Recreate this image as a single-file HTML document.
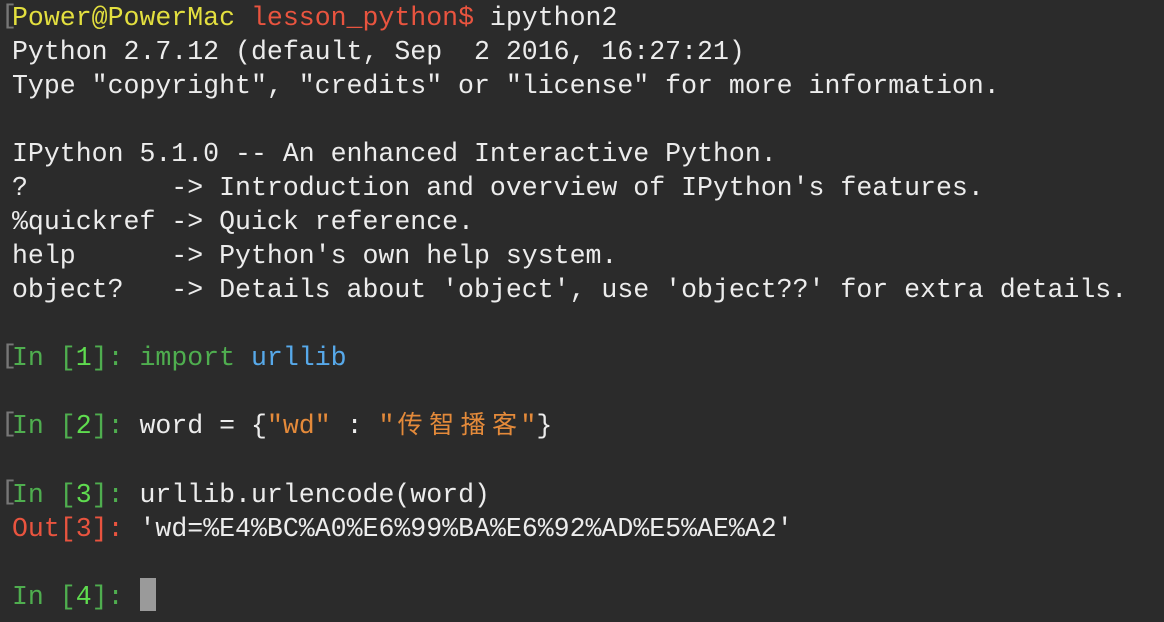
<!DOCTYPE html>
<html><head><style>
body{margin:0;background:#2b2b2b;width:1164px;height:622px;overflow:hidden}
pre{margin:0;position:absolute;left:12px;top:1px;font-family:"Liberation Mono","Noto Sans CJK SC",monospace;font-size:26.55px;line-height:34px;color:#ececec}
.y{color:#e3df3f}.r{color:#e9543f}.g{color:#4fae4f}.G{color:#5fdc4f}.o{color:#e48a3a}.b{color:#57a9ea}
.c{display:inline-block;width:31.5px;text-align:center;font-size:25px}
.br{position:absolute;left:1px;color:#777;font-family:"Liberation Mono",monospace;font-size:27px;line-height:34px}
.cur{position:absolute;left:140px;top:578px;width:16px;height:33px;background:#9a9a9a}
</style></head><body>
<div class="br" style="top:0">[</div>
<div class="br" style="top:340px">[</div>
<div class="br" style="top:408px">[</div>
<div class="br" style="top:476px">[</div>
<pre><span class="y">Power@PowerMac</span> <span class="r">lesson_python$</span> ipython2
Python 2.7.12 (default, Sep  2 2016, 16:27:21)
Type "copyright", "credits" or "license" for more information.

IPython 5.1.0 -- An enhanced Interactive Python.
?         -> Introduction and overview of IPython's features.
%quickref -> Quick reference.
help      -> Python's own help system.
object?   -> Details about 'object', use 'object??' for extra details.

<span class="g">In [</span><span class="G">1</span><span class="g">]: import</span> <span class="b">urllib</span>

<span class="g">In [</span><span class="G">2</span><span class="g">]:</span> word = {<span class="o">"wd"</span> : <span class="o">"<span class="c">传</span><span class="c">智</span><span class="c">播</span><span class="c">客</span>"</span>}

<span class="g">In [</span><span class="G">3</span><span class="g">]:</span> urllib.urlencode(word)
<span class="r">Out[</span><span class="r">3</span><span class="r">]:</span> 'wd=%E4%BC%A0%E6%99%BA%E6%92%AD%E5%AE%A2'

<span class="g">In [</span><span class="G">4</span><span class="g">]:</span> </pre>
<div class="cur"></div>
</body></html>
